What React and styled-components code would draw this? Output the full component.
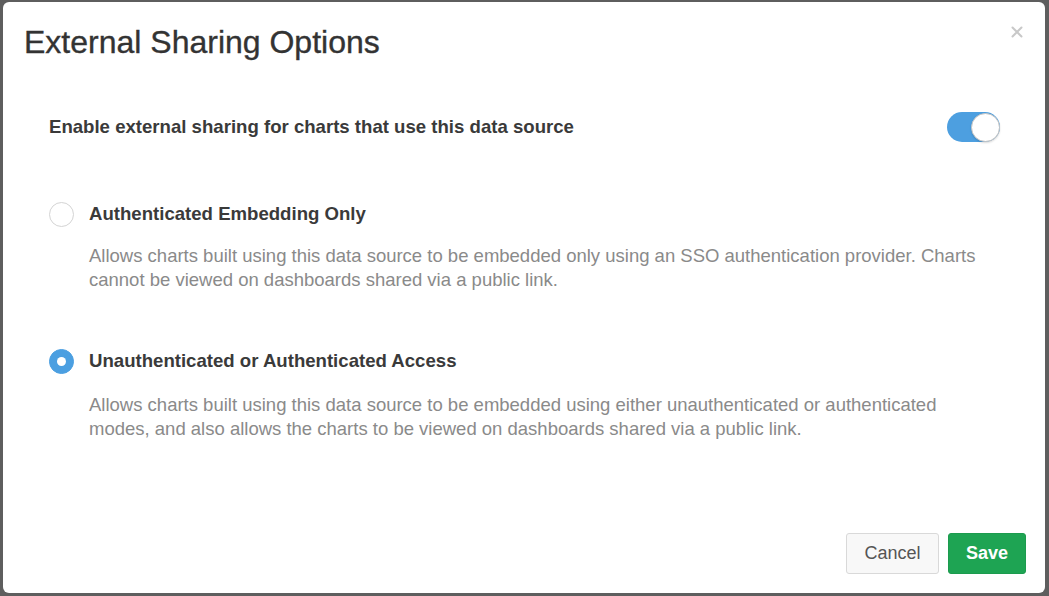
import React from "react";
import styled, { createGlobalStyle } from "styled-components";

const Global = createGlobalStyle`
  html, body { margin: 0; padding: 0; }
  body { background: #5e5e5e; font-family: "Liberation Sans", Arial, sans-serif; }
  * { box-sizing: border-box; }
`;

const Backdrop = styled.div`
  height: 596px;
  padding: 2px 4px 3px 3px;
  background: #5e5e5e;
`;

const Modal = styled.div`
  height: 100%;
  background: #fff;
  border-radius: 6px;
  display: flex;
  flex-direction: column;
`;

const Header = styled.div`
  display: flex;
  justify-content: space-between;
  align-items: flex-start;
  padding: 22px 22px 0 21px;
`;

const Title = styled.h2`
  margin: 0;
  font-size: 32px;
  line-height: 36px;
  font-weight: 400;
  color: #333;
  -webkit-text-stroke: 0.35px #333;
`;

const Close = styled.button`
  margin-top: 2px;
  width: 12px;
  height: 12px;
  padding: 0;
  border: 0;
  background: none;
  display: flex;
  cursor: pointer;
`;

const Body = styled.div`
  padding: 0 45px 0 46px;
  display: flex;
  flex-direction: column;
`;

const ToggleRow = styled.div`
  margin-top: 52px;
  height: 30px;
  display: flex;
  align-items: center;
  justify-content: space-between;
`;

const Label = styled.span`
  font-size: 18.6px;
  font-weight: 700;
  color: #3a3a3a;
  line-height: 26px;
`;

const Track = styled.div`
  width: 53px;
  height: 30px;
  border-radius: 15px;
  background: ${(p) => (p.$on ? "#4d9fe0" : "#ddd")};
  display: flex;
  align-items: center;
  justify-content: ${(p) => (p.$on ? "flex-end" : "flex-start")};
`;

const Knob = styled.div`
  width: 29px;
  height: 29px;
  border-radius: 50%;
  background: #fff;
  border: 1px solid #c4c4c4;
  box-shadow: 0 1px 2px rgba(0, 0, 0, 0.15);
`;

const OptionRow = styled.label`
  margin-top: ${(p) => p.$mt}px;
  height: 26px;
  display: flex;
  align-items: center;
  gap: 15px;
`;

const Radio = styled.span`
  width: 25px;
  height: 25px;
  border-radius: 50%;
  flex: none;
  display: flex;
  align-items: center;
  justify-content: center;
  background: ${(p) => (p.$checked ? "#4b9fe1" : "#fff")};
  border: 1px solid ${(p) => (p.$checked ? "#4b9fe1" : "#d4d4d4")};
  &::after {
    content: "";
    display: ${(p) => (p.$checked ? "block" : "none")};
    width: 9px;
    height: 9px;
    border-radius: 50%;
    background: #fff;
  }
`;

const Desc = styled.p`
  margin: ${(p) => p.$mt}px 15px 0 40px;
  font-size: 18.5px;
  line-height: 24px;
  color: #8a8a8a;
`;

const Footer = styled.div`
  margin-top: auto;
  display: flex;
  justify-content: flex-end;
  gap: 9px;
  padding: 0 19px 19px 0;
`;

const Button = styled.button`
  height: 41px;
  padding: 0 ${(p) => (p.$primary ? 17 : 17.5)}px;
  border-radius: 3px;
  font-family: "Liberation Sans", Arial, sans-serif;
  font-size: 18px;
  cursor: pointer;
  background: ${(p) => (p.$primary ? "#1ea453" : "#f8f8f8")};
  color: ${(p) => (p.$primary ? "#fff" : "#555")};
  border: 1px solid ${(p) => (p.$primary ? "#1c9b4e" : "#d9d9d9")};
  font-weight: ${(p) => (p.$primary ? 700 : 400)};
`;

export default function App() {
  return (
    <>
      <Global />
      <Backdrop>
        <Modal>
          <Header>
            <Title>External Sharing Options</Title>
            <Close aria-label="Close">
              <svg width="12" height="12" viewBox="0 0 12 12">
                <path d="M1.5 1.5 L10.5 10.5 M10.5 1.5 L1.5 10.5" stroke="#c8c8c8" strokeWidth="2" strokeLinecap="round" />
              </svg>
            </Close>
          </Header>
          <Body>
            <ToggleRow>
              <Label>Enable external sharing for charts that use this data source</Label>
              <Track $on>
                <Knob />
              </Track>
            </ToggleRow>
            <OptionRow $mt={59}>
              <Radio />
              <Label>Authenticated Embedding Only</Label>
            </OptionRow>
            <Desc $mt={17}>
              Allows charts built using this data source to be embedded only using an SSO authentication provider. Charts
              cannot be viewed on dashboards shared via a public link.
            </Desc>
            <OptionRow $mt={56}>
              <Radio $checked />
              <Label>Unauthenticated or Authenticated Access</Label>
            </OptionRow>
            <Desc $mt={19}>
              Allows charts built using this data source to be embedded using either unauthenticated or authenticated
              modes, and also allows the charts to be viewed on dashboards shared via a public link.
            </Desc>
          </Body>
          <Footer>
            <Button>Cancel</Button>
            <Button $primary>Save</Button>
          </Footer>
        </Modal>
      </Backdrop>
    </>
  );
}
